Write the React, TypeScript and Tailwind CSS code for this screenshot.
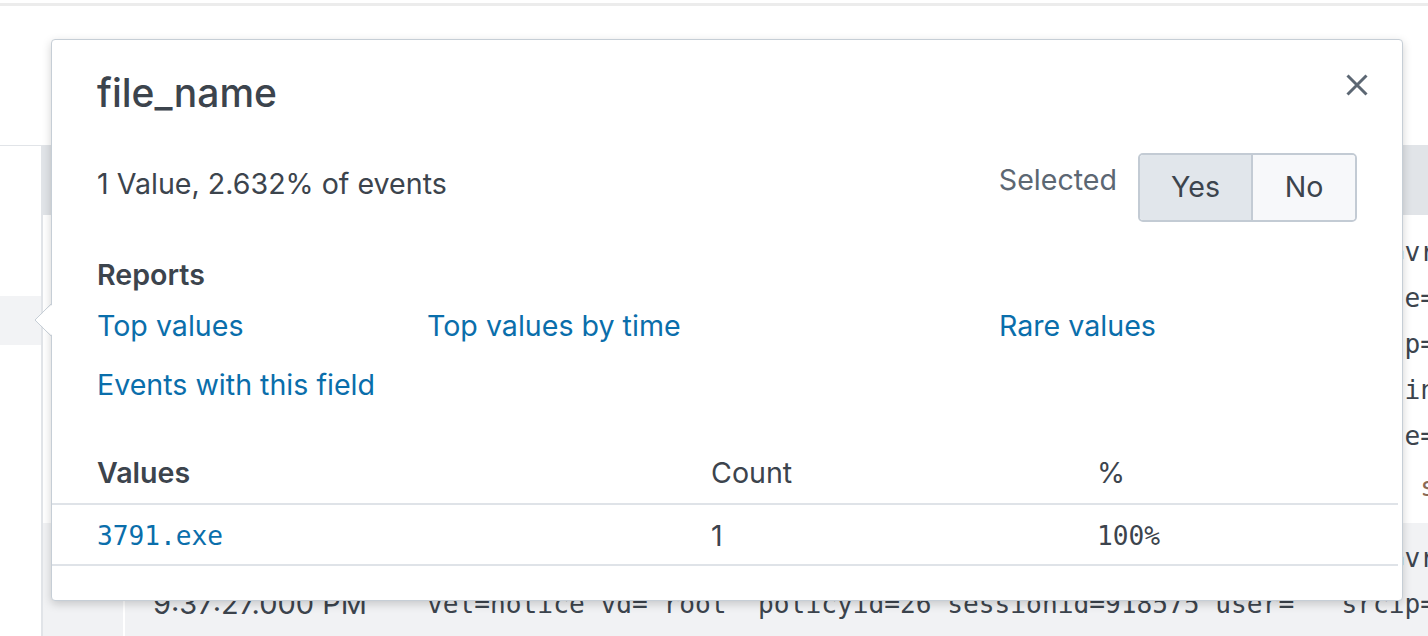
import React from "react";

const pad = (s: string, n: number) => (s + " ".repeat(n)).slice(0, n);

const row1Lines = [
  pad('date=2019-10-21 time=21:37:27 devname="FG100D" devid="FG100D3G16', 62) + "vrf=0",
  pad('logid="0000000013" type="traffic" subtype="forward" eventtype', 62) + "e=traffic",
  pad('srcip=10.10.20.31 srcport=51544 srcintf="port2" srcintfrole="la', 62) + "p=10.1.1.1",
  pad('dstport=443 dstintf="wan1" dstintfrole="wan" poluuid="4b2c9e1a', 62) + "intf",
  pad('service="HTTPS" dstcountry="United States" srccountry="Reserv', 62) + "e=accept",
];

const row2Lines = [
  pad('date=2019-10-21 time=21:37:27 devname="FG100D" devid="FG100D3G16', 62) + "vrf=0",
  'vel=notice vd="root" policyid=26 sessionid=918575 user="" srcip=10.10.20.31',
];

export default function App() {
  return (
    <div className="relative h-[636px] w-[1428px] overflow-hidden bg-white font-['Inter',sans-serif] text-[#3c444d]">
      {/* top bar */}
      <div className="h-[3px]" />
      <div className="h-[3px] bg-[#ececec]" />
      <div className="h-[139px]" />

      {/* background content */}
      <div className="flex h-[491px]">
        <aside className="w-[41px] shrink-0 border-t border-[#e1e4e8] bg-white">
          <div className="mt-[150px] h-[49px] bg-[#f2f3f5]" />
        </aside>
        <main className="flex min-w-0 flex-1 flex-col border-l-2 border-[#e1e4e8]">
          <div className="h-[70px] shrink-0 bg-[#e1e4e8]" />
          <div className="flex h-[308px] shrink-0 bg-white">
            <div className="w-[82px] shrink-0 border-r-2 border-[#f1f2f4]" />
            <div className="w-[302px] shrink-0 pl-[28px] pt-[14px] text-[29px] leading-[46px]">
              <div>10/21/19</div>
              <div>9:37:27.000 PM</div>
            </div>
            <div className="min-w-0 flex-1 overflow-hidden pt-[14px] font-['DejaVu_Sans_Mono',monospace] text-[26.2px] leading-[46px] whitespace-pre">
              {row1Lines.map((l, i) => (
                <div key={i}>{l}</div>
              ))}
              <div className="mt-[12px] leading-[32px] text-[#8a6a55]">
                {pad("host = FG100D | source = udp:514 | sourcetype = fgt_tr", 63)}
                sourcetype
              </div>
            </div>
          </div>
          <div className="flex flex-1 bg-[#f1f2f4]">
            <div className="w-[82px] shrink-0 border-r-2 border-white" />
            <div className="w-[302px] shrink-0 pl-[28px] pt-[12px] text-[29px] leading-[46px]">
              <div>10/21/19</div>
              <div>9:37:27.000 PM</div>
            </div>
            <div className="min-w-0 flex-1 overflow-hidden pt-[12px] font-['DejaVu_Sans_Mono',monospace] text-[26.2px] leading-[46px] whitespace-pre">
              {row2Lines.map((l, i) => (
                <div key={i}>{l}</div>
              ))}
            </div>
          </div>
        </main>
      </div>

      {/* popover */}
      <div className="absolute left-[51px] top-[39px] flex h-[562px] w-[1352px] flex-col rounded-[4px] border border-[#c6ced6] bg-white shadow-[0_3px_10px_rgba(0,0,0,0.18)]">
        <svg
          className="absolute left-[-18px] top-[263px]"
          width="20"
          height="35"
          viewBox="0 0 20 35"
        >
          <polygon points="20,0 1,17 20,34" fill="#ffffff" />
          <polyline points="18,0 1,17 18,34" fill="none" stroke="#c6ced6" strokeWidth="1" />
        </svg>

        <div className="flex items-start justify-between pl-[45px] pr-[33px] pt-[33px]">
          <h2 className="text-[39px] font-medium leading-[40px] text-[#3c444d]">file_name</h2>
          <button className="h-[24px] w-[24px]" aria-label="Close">
            <svg width="24" height="24" viewBox="0 0 24 24">
              <path d="M2.5 2.5 L21.5 21.5 M21.5 2.5 L2.5 21.5" stroke="#5c6773" strokeWidth="3" fill="none" />
            </svg>
          </button>
        </div>

        <div className="mt-[40px] flex h-[69px] items-start justify-between pl-[45px] pr-[45px]">
          <div className="mt-[15px] text-[28.6px] leading-[32px]">1 Value, 2.632% of events</div>
          <div className="flex items-start">
            <span className="mr-[21px] mt-[11px] text-[28.6px] leading-[32px] text-[#5c6773]">Selected</span>
            <div className="flex h-[69px] w-[219px] overflow-hidden rounded-[5px] border-2 border-[#c3cbd4] text-[28.6px]">
              <div className="flex w-[113px] items-center justify-center border-r-2 border-[#c3cbd4] bg-[#e1e6eb]">
                Yes
              </div>
              <div className="flex flex-1 items-center justify-center bg-[#f7f8fa]">No</div>
            </div>
          </div>
        </div>

        <div className="mt-[37px] pl-[45px] text-[28.6px] font-semibold leading-[32px]">Reports</div>
        <div className="mt-[19px] grid grid-cols-[330px_572px_1fr] gap-y-[27px] pl-[45px] text-[28.6px] leading-[32px] text-[#0a6eab]">
          <span>Top values</span>
          <span>Top values by time</span>
          <span>Rare values</span>
          <span>Events with this field</span>
        </div>

        <div className="mr-[4px] mt-[56px]">
          <div className="grid grid-cols-[659px_386px_1fr] border-b-2 border-[#dfe3e8] pb-[14px] text-[28.6px] leading-[32px]">
            <span className="pl-[45px] font-semibold">Values</span>
            <span>Count</span>
            <span>%</span>
          </div>
          <div className="grid grid-cols-[659px_386px_1fr] border-b-2 border-[#dfe3e8] pb-[12px] pt-[15px] leading-[32px]">
            <span className="pl-[45px] font-['DejaVu_Sans_Mono',monospace] text-[26.2px] text-[#0a6eab]">3791.exe</span>
            <span className="text-[28.6px]">1</span>
            <span className="font-['DejaVu_Sans_Mono',monospace] text-[26.2px]">100%</span>
          </div>
        </div>
      </div>
    </div>
  );
}
